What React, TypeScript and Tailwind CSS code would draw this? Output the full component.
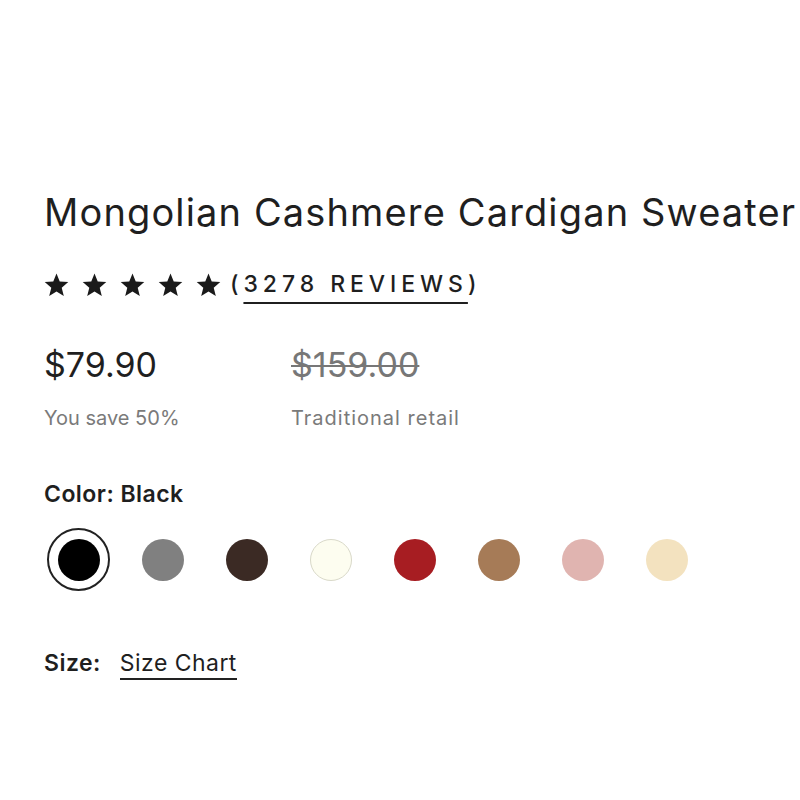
import React from "react";

const swatches = [
  { name: "Black", cls: "bg-[#000000]" },
  { name: "Grey", cls: "bg-[#808080]" },
  { name: "Chocolate", cls: "bg-[#3b2a24]" },
  { name: "Ivory", cls: "bg-[#fdfdf0] border border-[#d9d9c9]" },
  { name: "Red", cls: "bg-[#a71d22]" },
  { name: "Camel", cls: "bg-[#a67b57]" },
  { name: "Blush", cls: "bg-[#e0b4b0]" },
  { name: "Oat", cls: "bg-[#f3e2bf]" },
];

function Star() {
  return (
    <svg viewBox="0 0 24 24" className="w-[25px] h-[25px]" fill="#1a1a1a">
      <path d="M12 1.5l3.1 7.6 8.2.6-6.3 5.3 2 8-7-4.3-7 4.3 2-8L.7 9.7l8.2-.6z" />
    </svg>
  );
}

export default function App() {
  return (
    <div
      className="w-[800px] h-[800px] overflow-hidden bg-white text-[#1f1f1f] pl-[44px] pt-[189px]"
      style={{ fontFamily: "Inter, 'Liberation Sans', sans-serif" }}
    >
      <h1 className="text-[38px] leading-[46px] font-normal tracking-[0.03em] whitespace-nowrap">
        Mongolian Cashmere Cardigan Sweater
      </h1>

      <div className="mt-[33px] h-[32px] flex items-center">
        <div className="flex items-center gap-[13px]">
          <Star />
          <Star />
          <Star />
          <Star />
          <Star />
        </div>
        <span className="ml-[9px] text-[23px] leading-[32px] font-medium tracking-[0.215em] uppercase whitespace-nowrap">
          (
          <span className="underline decoration-[2px] underline-offset-[10px]">3278 Reviews</span>)
        </span>
      </div>

      <div className="mt-[45px] flex">
        <div className="w-[247px]">
          <div className="text-[34px] leading-[40px]">$79.90</div>
          <div className="mt-[21px] text-[20px] leading-[24px] text-[#7a7a7a]">You save 50%</div>
        </div>
        <div>
          <div className="text-[34px] leading-[40px] text-[#777] line-through decoration-[1.5px]">
            $159.00
          </div>
          <div className="mt-[21px] text-[20px] leading-[24px] tracking-[0.05em] text-[#7a7a7a]">
            Traditional retail
          </div>
        </div>
      </div>

      <div className="mt-[50px] text-[23px] leading-[28px] font-semibold tracking-[0.02em]">Color: Black</div>

      <div className="mt-[20px] ml-[3px] flex items-center gap-[21px]">
        {swatches.map((s, i) => (
          <div
            key={s.name}
            className={
              "w-[63px] h-[63px] rounded-full flex items-center justify-center " +
              (i === 0 ? "border-2 border-[#222]" : "")
            }
          >
            <div className={"w-[42px] h-[42px] rounded-full " + s.cls} />
          </div>
        ))}
      </div>

      <div className="mt-[58px] flex items-baseline text-[23px] leading-[28px] tracking-[0.02em]">
        <span className="font-semibold">Size:</span>
        <span className="ml-[19px] inline-block pb-[1px] border-b-2 border-[#222]">Size Chart</span>
      </div>
    </div>
  );
}
